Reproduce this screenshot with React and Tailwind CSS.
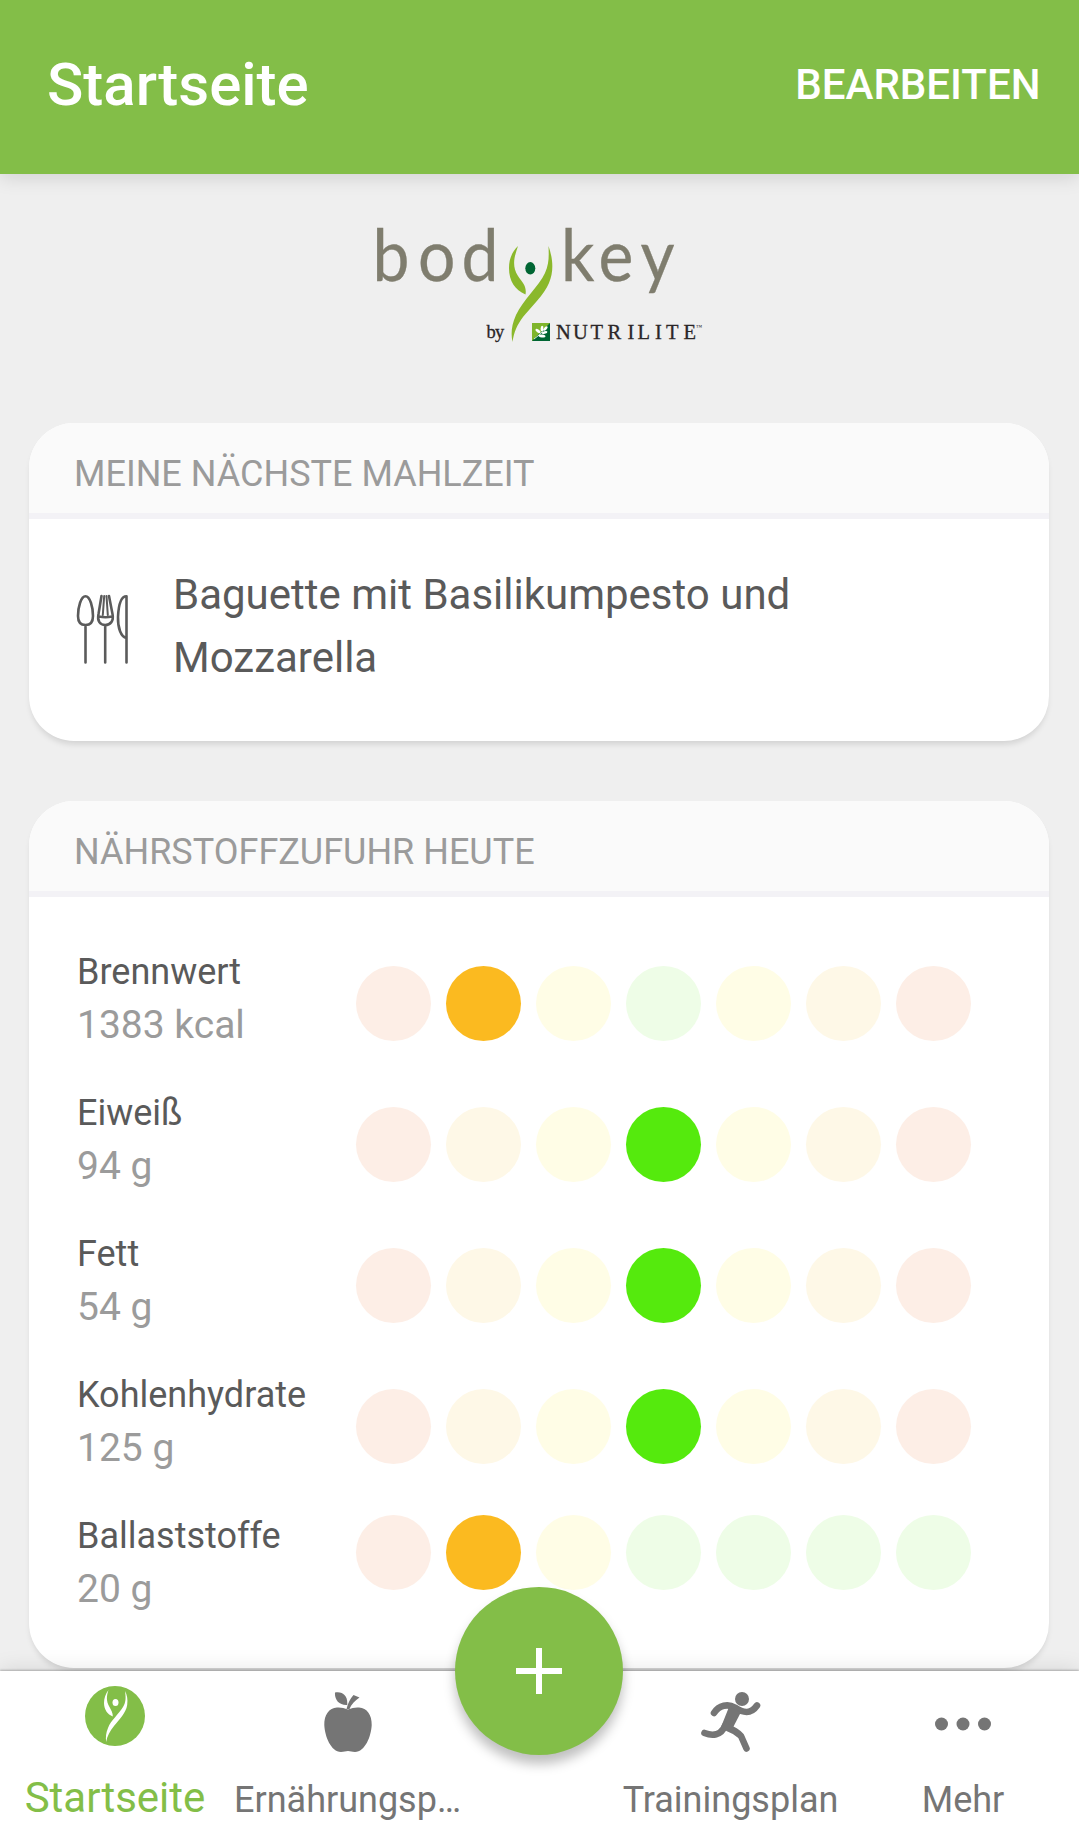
const PALE = {
  red: 'bg-[#fdeee6]',
  orange: 'bg-[#fef8e7]',
  yellow: 'bg-[#fffde6]',
  green: 'bg-[#eefde7]',
};

const ACTIVE = {
  orange: 'bg-[#fbba20]',
  green: 'bg-[#55ea0d]',
};

const SCALE = ['red', 'orange', 'yellow', 'green', 'yellow', 'orange', 'red'];
const FIBER_SCALE = ['red', 'orange', 'yellow', 'green', 'green', 'green', 'green'];

const nutrients = [
  { name: 'Brennwert', value: '1383 kcal', active: 1, scale: SCALE },
  { name: 'Eiweiß', value: '94 g', active: 3, scale: SCALE },
  { name: 'Fett', value: '54 g', active: 3, scale: SCALE },
  { name: 'Kohlenhydrate', value: '125 g', active: 3, scale: SCALE },
  { name: 'Ballaststoffe', value: '20 g', active: 1, scale: FIBER_SCALE, compact: true },
];

const Logo = () => (
  <svg className="w-[360px] h-[152px]" viewBox="0 -12 360 152" role="img" aria-label="bodykey by Nutrilite">
    <g
      fill="#7f7d6e"
      stroke="#7f7d6e"
      strokeWidth="0.300"
      fontFamily="Lato, sans-serif"
      fontSize="66"
      transform="translate(0 70.500) scale(1 1.080)"
    >
      <text x="12.500 58 101.500" y="0">bod</text>
      <text x="201 238.500 280.500" y="0">key</text>
    </g>
    {/* Figure */}
    <g fill="#8ab82b">
      <path d="M158 36C152 42 149 49 149 58C149 71 155 80 165.500 84.500C167 76 162 72 158 66C151 55 155 45 158 36Z" />
      <path d="M188.500 36C189 47 189 54 185 63C179 76 163 90 156 105C151 116 151 125 152.500 132C154 122 157 115 163 107C171 97 184 85 189 73C194 61 193 49 188.500 36Z" />
    </g>
    <ellipse cx="170.300" cy="58.300" rx="5" ry="6.200" fill="#006533" />
    {/* Leaf badge */}
    <path d="M172 113h18v18h-18z" fill="#006533" />
    <path d="M172 113h18l-18 18z" fill="#7fb52b" />
    <g fill="#fff">
      <ellipse cx="178" cy="121" rx="3" ry="1.400" transform="rotate(35 178 121)" />
      <ellipse cx="182" cy="118.500" rx="2.800" ry="1.400" transform="rotate(95 182 118.500)" />
      <ellipse cx="185.500" cy="118.500" rx="2.700" ry="1.300" transform="rotate(-45 185.500 118.500)" />
      <ellipse cx="184.500" cy="122.500" rx="3" ry="1.300" transform="rotate(-15 184.500 122.500)" />
      <ellipse cx="182" cy="126" rx="3.500" ry="1.400" transform="rotate(10 182 126)" />
    </g>
    <path d="M174 129C178 126 182 123 184 119" stroke="#fff" strokeWidth="0.800" fill="none" />
    <g fill="#2b2627" stroke="#2b2627" strokeWidth="0.300" fontFamily="'Liberation Serif', serif">
      <text x="126.500 135" y="128" fontSize="18.500">by</text>
      <text x="196 213 230.500 247.500 267.500 277.500 295 306 323.500" y="129" fontSize="20.500">NUTRILITE</text>
      <text x="336" y="119" fontSize="6" stroke="none">™</text>
    </g>
  </svg>
);

const CutleryIcon = () => (
  <svg className="w-[54px] h-[70px]" viewBox="0 0 54 70" fill="none" stroke="#5b5b5b" strokeWidth="2.600" strokeLinecap="round" strokeLinejoin="round">
    <path d="M9.500 2.300C5 2.300 2 13 2 22C2 28 5 31 9.500 31S17 28 17 22C17 13 14 2.300 9.500 2.300ZM9.500 31V68.500" />
    <path d="M25.500 2L22.500 20C21 27 24 31 29.200 31S38 27 36.500 20L33 2M23 22.500Q29.500 24 36 22.500M29.200 31V68.500" />
    <path d="M28.200 2L26.800 21M30.500 2L31.800 21" strokeWidth="2" />
    <path d="M50.500 68.500V2.300C45 2.300 42.500 12 42 23C41.700 34 45 43 50.500 44" />
  </svg>
);

const BodyKeyIcon = () => (
  <svg className="w-[60px] h-[60px]" viewBox="0 0 60 60">
    <circle cx="30" cy="30" r="30" fill="#83be48" />
    <g fill="#fff">
      <path d="M23.500 4C20.500 8 19 12 19 17C19 23.500 22.500 28.500 27.800 30.500C28 27 26 24 24.500 21C21 15 21.500 10 23.500 4Z" />
      <path d="M40 5C41 12 41 16 38 21C34 28 26 34 23 42C21 47 20.500 51 21.200 56C22 50 25 45 29 40C34 34 41 27 42.200 19C43 13 42 9 40 5Z" />
      <ellipse cx="30.500" cy="16.500" rx="3" ry="3.500" />
    </g>
  </svg>
);

const AppleIcon = () => (
  <svg className="w-[48px] h-[60px]" viewBox="0 0 48 60" fill="#757575">
    <path d="M11 0.500C19 -1 24 4 23.200 13C15 13.500 10.500 8 11 0.500Z" />
    <path d="M22.500 17C24 11 26 7 29.500 3L35.500 5.500C31 8.500 27 12.500 25.500 17Z" />
    <path d="M24 17.500C20 16 17 15.200 13 15.500C5 16 0 23 0.300 33C0.700 44 7 60 17 60C20 60 21.500 59 24 59S28 60 31 60C41 60 47.300 44 47.700 33C48 23 43 16 35 15.500C31 15.200 28 16 24 17.500Z" />
  </svg>
);

const RunnerIcon = () => (
  <svg className="w-[60px] h-[60px]" viewBox="0 0 60 60" fill="none" stroke="#757575" strokeWidth="6.600" strokeLinecap="round" strokeLinejoin="round">
    <circle cx="41" cy="7" r="7" fill="#757575" stroke="none" />
    <path d="M13 21C18 13 27 11.500 34 15.500C43 21.500 50 22 56 13.500" />
    <path d="M28 15L40 20L31.500 36.500L20 35Z" fill="#757575" stroke="none" />
    <path d="M24.500 33C20 44 11 44 3.500 41M27 36C33 38 37 41 40 44L45.500 56.500" />
  </svg>
);

const MoreIcon = () => (
  <svg className="mt-[3px] w-[56px] h-[14px]" viewBox="0 0 56 14" fill="#757575">
    <circle cx="6.500" cy="7" r="6.500" />
    <circle cx="28" cy="7" r="6.500" />
    <circle cx="49.500" cy="7" r="6.500" />
  </svg>
);

const Card = ({ title, children, className }) => (
  <section className={`ml-[29px] mr-[30px] rounded-[45px] overflow-hidden bg-white shadow-[0_5px_6px_-2px_rgba(0,0,0,0.13)] ${className}`}>
    <h2 className="h-24 pl-[45px] pt-[30px] bg-[#fafafa] border-b-6 border-[#f3f2f6] text-[36px] leading-[42px] text-[#9b9b9b]">
      {title}
    </h2>
    {children}
  </section>
);

const NutrientRow = ({ name, value, active, scale, compact }) => (
  <div className="flex h-[141px]">
    <div className="w-[279px]">
      <div className="text-[36px] leading-[48px] text-[#5a5a5a]">{name}</div>
      <div className="text-[39px] leading-[58px] text-[#9b9b9b]">{value}</div>
    </div>
    <div className={compact ? 'flex gap-[15px] pt-[3px]' : 'flex gap-[15px] pt-[18px]'}>
      {scale.map((color, idx) => (
        <span
          key={idx}
          className={`size-[75px] rounded-full ${idx === active ? ACTIVE[color] : PALE[color]}`}
        />
      ))}
    </div>
  </div>
);

const NavItem = ({ icon, label, active }) => (
  <button className={`flex flex-col items-center ${active ? 'pr-px' : ''}`}>
    <span className={`flex h-[60px] items-center ${active ? 'mt-[15px]' : 'mt-[21px]'}`}>{icon}</span>
    <span
      className={`whitespace-nowrap leading-[50px] ${
        active ? 'mt-[27px] text-[42px] text-[#83be48]' : 'mt-[23px] text-[36px] text-[#757575]'
      }`}
    >
      {label}
    </span>
  </button>
);

const App = () => {
  return (
    <div className="flex flex-col w-[1079px] h-[1839px] overflow-hidden bg-[#efefef] font-[Roboto,sans-serif]">
      <header className="flex h-[174px] shrink-0 items-start justify-between bg-[#83be48] pl-[47px] pr-[38.5px] text-white font-medium shadow-[0_4px_18px_rgba(0,0,0,0.12)]">
        <h1 className="mt-[50px] text-[60px] leading-[70px]">Startseite</h1>
        <button className="mt-[60px] text-[42px] leading-[50px]">BEARBEITEN</button>
      </header>

      <main className="flex flex-col h-[1497px] shrink-0 overflow-hidden">
        <div className="flex justify-center pt-6">
          <Logo />
        </div>

        <Card title="MEINE NÄCHSTE MAHLZEIT" className="mt-[73px] h-[318px] shrink-0">
          <div className="flex items-start pl-[47px] pt-[44px]">
            <div className="pt-[31px]">
              <CutleryIcon />
            </div>
            <p className="ml-[43px] w-[660px] text-[42px] leading-[63px] text-[#5a5a5a]">
              Baguette mit Basilikumpesto und Mozzarella
            </p>
          </div>
        </Card>

        <Card title="NÄHRSTOFFZUFUHR HEUTE" className="mt-[60px] h-[867px] shrink-0">
          <div className="flex flex-col pl-12 pt-[51px]">
            {nutrients.map((nutrient) => (
              <NutrientRow key={nutrient.name} {...nutrient} />
            ))}
          </div>
        </Card>
      </main>

      {/* Bottom navigation */}
      <nav className="relative grid grid-cols-[231px_233px_150px_233px_232px] h-[168px] shrink-0 items-start bg-white shadow-[0_-1px_2px_rgba(0,0,0,0.25),0_-2px_20px_rgba(0,0,0,0.1)]">
        <NavItem icon={<BodyKeyIcon />} label="Startseite" active />
        <NavItem icon={<AppleIcon />} label="Ernährungsp…" />
        <span />
        <NavItem icon={<RunnerIcon />} label="Trainingsplan" />
        <NavItem icon={<MoreIcon />} label="Mehr" />
        <button
          aria-label="Hinzufügen"
          className="absolute left-[455px] -top-[84px] flex size-[168px] items-center justify-center rounded-full bg-[#83be48] shadow-[0_9px_12px_rgba(0,0,0,0.25)]"
        >
          <svg className="size-[46px]" viewBox="0 0 46 46" stroke="#fff" strokeWidth="6">
            <path d="M23 0V46M0 23H46" />
          </svg>
        </button>
      </nav>
    </div>
  );
};

export default App;
